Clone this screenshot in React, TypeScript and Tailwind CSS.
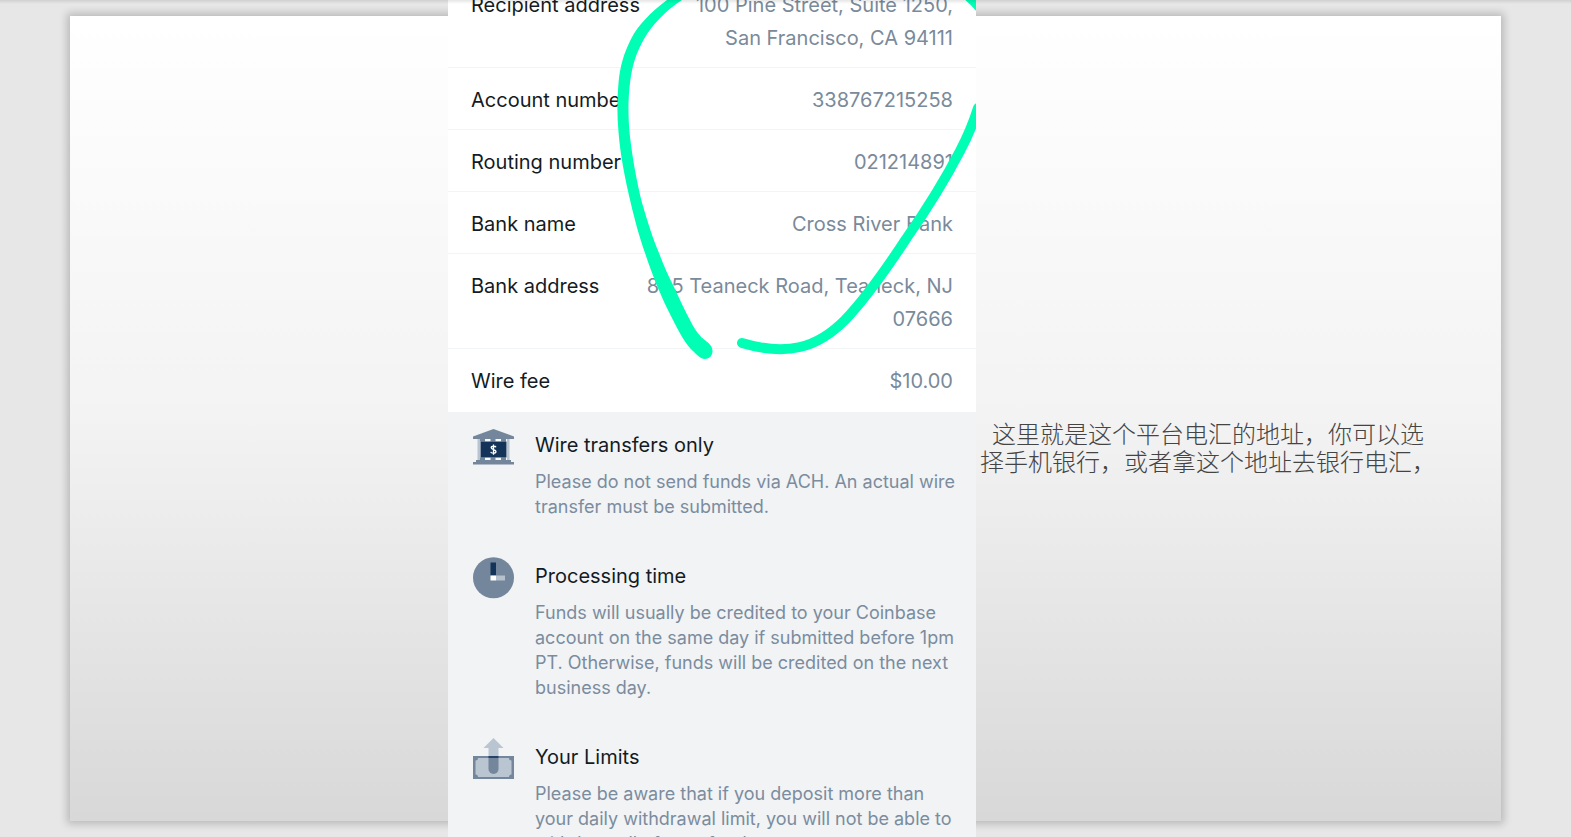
import type { ReactNode } from "react";

type Detail = { label: string; value: ReactNode };

const details: Detail[] = [
  {
    label: "Recipient address",
    value: (
      <>
        100 Pine Street, Suite 1250,
        <br />
        San Francisco, CA 94111
      </>
    ),
  },
  { label: "Account number", value: "338767215258" },
  { label: "Routing number", value: "021214891" },
  { label: "Bank name", value: "Cross River Bank" },
  {
    label: "Bank address",
    value: (
      <>
        885 Teaneck Road, Teaneck, NJ
        <br />
        07666
      </>
    ),
  },
  { label: "Wire fee", value: "$10.00" },
];

function BankIcon() {
  return (
    <svg viewBox="0 -3 41 42" className="h-[42px] w-[41px]" aria-hidden="true">
      <path d="M20.500 0 41 7.500V10H0V7.500Z" fill="#73869b" />
      <path d="M4.500 10H36.500V31H4.500Z" fill="#b8c4d0" />
      <path d="M7 10H34V31H7Z" fill="#f7fafc" />
      <path d="M7 10h5v2.500H7ZM17.500 10h5v2.500h-5ZM28 10h5v2.500h-5ZM7 28.500h5V31H7ZM17.500 28.500h5V31h-5ZM28 28.500h5V31h-5Z" fill="#73869b" />
      <path d="M7.500 12.500H33.500V28.500H7.500Z" fill="#133359" />
      <path d="M3 31H38V33H41V35.500H0V33H3Z" fill="#73869b" />
      <path d="M23 18.200C22.500 17 18.200 16.700 18.200 18.800C18.200 21 23 20 23 22.500C23 24.700 18.200 24.600 17.700 22.800M20.500 15.500V25.800" fill="none" stroke="#fff" strokeWidth="1.300" />
    </svg>
  );
}

function ClockIcon() {
  return (
    <svg viewBox="0 0 41 42" className="h-[42px] w-[41px]" aria-hidden="true">
      <circle cx="20.500" cy="20.700" r="20.500" fill="#73869b" />
      <path d="M17.500 5.500h5.500v13h-5.500Z" fill="#133359" />
      <path d="M23 18.500h9v5h-9Z" fill="#b5c1cd" />
      <path d="M17.500 18.500H23v5h-5.500Z" fill="#fff" />
    </svg>
  );
}

function LimitsIcon() {
  return (
    <svg viewBox="0 0 41 42" className="h-[42px] w-[41px]" aria-hidden="true">
      <path d="M0 18H41V41H0Z" fill="#73869b" />
      <path d="M5 20H36Q36 22.500 38.500 22.500V36.500Q36 36.500 36 39H5Q5 36.500 2.500 36.500V22.500Q5 22.500 5 20Z" fill="#b9c5d1" />
      <path d="M20.500 0 30.500 10H25.500V18H15.500V10H10.500Z" fill="#b9c5d1" />
      <path d="M15.500 20H25.500V31A5 5 0 0 1 15.500 31Z" fill="#73869b" />
      <path d="M15.500 18H25.500V20H15.500Z" fill="#24426a" />
    </svg>
  );
}

type Note = { title: string; icon: ReactNode; lines: string[] };

const notes: Note[] = [
  {
    title: "Wire transfers only",
    icon: <BankIcon />,
    lines: ["Please do not send funds via ACH. An actual wire", "transfer must be submitted."],
  },
  {
    title: "Processing time",
    icon: <ClockIcon />,
    lines: [
      "Funds will usually be credited to your Coinbase",
      "account on the same day if submitted before 1pm",
      "PT. Otherwise, funds will be credited on the next",
      "business day.",
    ],
  },
  {
    title: "Your Limits",
    icon: <LimitsIcon />,
    lines: [
      "Please be aware that if you deposit more than",
      "your daily withdrawal limit, you will not be able to",
      "withdraw all of your funds.",
    ],
  },
];

function MarkerCircle() {
  return (
    <svg
      viewBox="448 0 528 412"
      className="pointer-events-none absolute top-0 left-0 h-[412px] w-[528px]"
      aria-hidden="true"
    >
      <path
        d="M667 0C650 13 638 25 631 39C624 53 620 66 618.500 83C617 99 617 116 618.500 132C620 153 625 179 631 204C635 221 640 239 645 253C653 277 661 297 673 320C679 332 686 345 693 351C697 355 701 359 704.500 359C709 359 712.500 356 712.500 351C712.500 347 710 344 706 341C700 337 695 330 691 322C685 311 679 298 674 287C668 275 663 264 659 253C653 239 647 220 643 206C638 188 632 157 629.500 132C628 116 628 99 630 83C632 66 636 53 644 39C652 25 665 11 682 0Z"
        fill="#00ffb4"
      />
      <path
        d="M742 343C762 349 783 351 800 347C818 343 833 332 845 320C866 298 885 271 906 239C927 209 946 178 960 151C968 136 973 124 978 108M962 -9C970 -3 978 4 984 13"
        fill="none"
        stroke="#00ffb4"
        strokeWidth="10"
        strokeLinecap="round"
        strokeLinejoin="round"
      />
    </svg>
  );
}

function TransferPanel() {
  return (
    <main className="relative h-full w-[528px] shrink-0 overflow-hidden bg-[#f1f3f5] font-['Inter',sans-serif]">
      <dl className="-mt-[27px] bg-white text-xl leading-[33px]">
        {details.map((d) => (
          <div
            key={d.label}
            className="flex justify-between border-b border-[#f3f4f6] px-[23px] pt-4 pb-3 whitespace-nowrap last:border-b-0 last:pb-3.5"
          >
            <dt className="text-[#141b23]">{d.label}</dt>
            <dd className="text-right text-[#7a8a9a]">{d.value}</dd>
          </div>
        ))}
      </dl>
      <div className="flex flex-col gap-[43px] px-[25px] pt-[19px]">
        {notes.map((n) => (
          <section key={n.title} className="flex items-start gap-[21px]">
            <div className="-mt-[5px] h-[42px] shrink-0">{n.icon}</div>
            <div className="whitespace-nowrap">
              <h2 className="text-xl leading-7 text-[#141b23]">{n.title}</h2>
              <p className="mt-2.5 text-lg leading-[25px] text-[#7b8c9e]">
                {n.lines.map((line) => (
                  <span key={line} className="block">
                    {line}
                  </span>
                ))}
              </p>
            </div>
          </section>
        ))}
      </div>
      <MarkerCircle />
    </main>
  );
}

export default function App() {
  return (
    <div className="relative grid h-screen grid-cols-1 grid-rows-1 overflow-hidden bg-[#e7e7e7]">
      <div className="col-start-1 row-start-1 mx-[70px] mt-4 mb-4 bg-linear-to-b from-white via-[#f3f3f3] to-[#d8d8d8] shadow-[0_0_8px_3px_rgba(0,0,0,0.2)]" />
      <div className="relative col-start-1 row-start-1 flex min-h-0">
        <div className="min-w-0 flex-[448]" />
        <TransferPanel />
        <aside className="min-w-0 flex-[595]">
          <p className="mt-[419px] ml-1 indent-3 font-['Noto_Sans_CJK_SC',sans-serif] text-2xl leading-7 font-light whitespace-nowrap text-[#444]">
            这里就是这个平台电汇的地址，你可以选
            <br />
            择手机银行，或者拿这个地址去银行电汇，
          </p>
        </aside>
      </div>
      <div className="pointer-events-none absolute inset-x-0 top-0 h-1 bg-linear-to-b from-black/10 to-transparent" />
    </div>
  );
}
